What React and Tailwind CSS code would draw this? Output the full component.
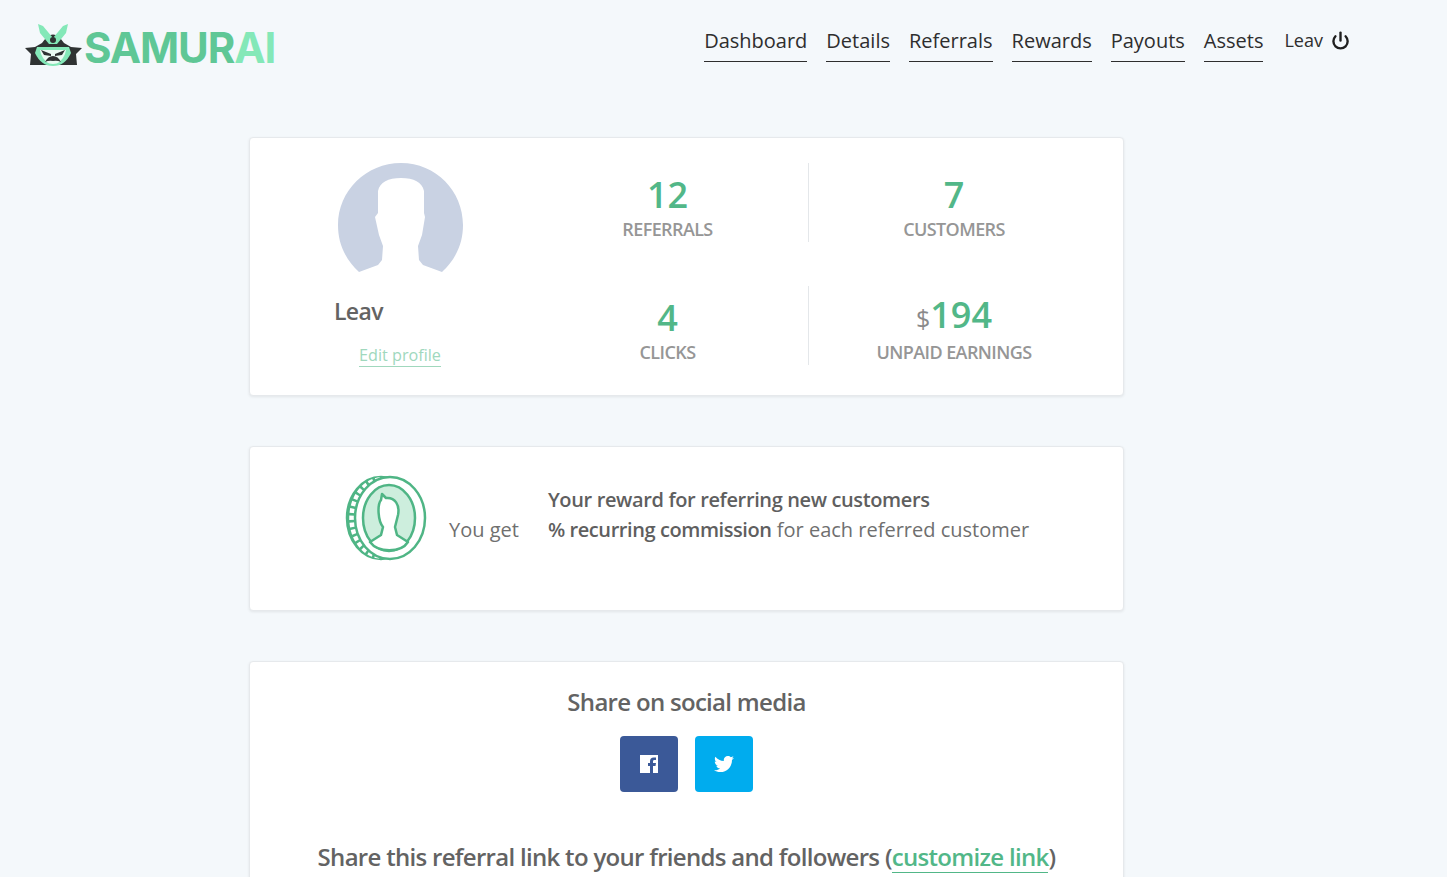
import React from "react";
import { Power } from "lucide-react";
import { FaTwitter } from "react-icons/fa";

const navLinks = ["Dashboard", "Details", "Referrals", "Rewards", "Payouts", "Assets"];

function SamuraiMark() {
  return (
    <svg width="58" height="44" viewBox="0 0 58 44">
      <path d="M18 20 Q29 3 40 20 L47 24 L58 25 L52 31 L53 42 L6 42 L7 31 L1 25 L11 24 Z" fill="#2f3333" />
      <path d="M14 1 L19 3 L29 15 L39 3 L44 1 L42 10 L33 21 L25 21 L16 10 Z" fill="#84e8b8" />
      <circle cx="29" cy="17" r="3" fill="#2f3333" />
      <path d="M13 24 L45 24 L47 30 Q41 43 29 43 Q17 43 11 30 Z" fill="#84e8b8" />
      <path d="M16 27 L42 27 L41 31 Q37 41 29 41 Q21 41 17 31 Z" fill="#eafbf3" />
      <path d="M17 27 L27 31 L27 33 L20 32 Z M41 27 L31 31 L31 33 L38 32 Z" fill="#2f3333" />
      <path d="M21 39 Q24 33 29 33 Q34 33 37 39 Q33 37 29 38 Q25 37 21 39 Z" fill="#2f3333" />
    </svg>
  );
}

function Avatar() {
  return (
    <svg width="126" height="112" viewBox="0 0 126 112">
      <path
        d="M21 109 C6 95 0 79 0 62 C0 28 28 0 63 0 C98 0 125 28 125 62 C125 79 119 95 104 109 L85 102 L81 97 L80 83 L84 72 L87 54 L86 50 L86 28 C84 19 76 15 63 15 C50 15 42 19 40 28 L40 50 L37 54 L41 72 L45 83 L44 97 L40 102 Z"
        fill="#c9d2e3"
      />
    </svg>
  );
}

function Coin() {
  return (
    <svg width="82" height="86" viewBox="0 0 82 86" fill="none">
      <ellipse cx="36" cy="43" rx="34" ry="41" fill="#4fb585" stroke="#4fb585" strokeWidth="2.5" />
      <ellipse cx="37" cy="43" rx="30" ry="38" stroke="#fff" strokeWidth="5.5" strokeDasharray="4.5 2.5" />
      <ellipse cx="45" cy="43" rx="35" ry="41" fill="#fff" stroke="#4fb585" strokeWidth="2.5" />
      <ellipse cx="44" cy="43" rx="26" ry="33" fill="#cdeedd" stroke="#4fb585" strokeWidth="2.5" />
      <path
        d="M25 67 L36 60 L38 52 C33 46 32 30 36 25 L37 19 L41 23 C50 22 55 30 53 40 L50 52 L52 60 L63 67 C56 78 33 78 25 67 Z"
        fill="#fff"
        stroke="#4fb585"
        strokeWidth="2.5"
        strokeLinejoin="round"
      />
    </svg>
  );
}

function Stat({ value, label, prefix, className = "" }) {
  return (
    <div className={`flex h-[79px] flex-col items-center justify-end ${className}`}>
      <div className="text-[36px] leading-[50px] font-semibold text-[#52b788]">
        {prefix && <span className="text-[25px] font-normal text-[#8a8a8a]">{prefix}</span>}
        {value}
      </div>
      <div className="-mt-[3px] text-[18px] leading-[25px] font-semibold tracking-[-0.6px] text-[#969696] uppercase">
        {label}
      </div>
    </div>
  );
}

export default function App() {
  return (
    <div className="h-screen overflow-hidden bg-[#f4f8fb] font-['Open_Sans',sans-serif] text-[#5f5f5f]">
      <header className="flex h-[137px] items-start">
        <div className="mt-[23px] ml-[24px] flex items-start">
          <SamuraiMark />
          <span className="ml-[2px] font-['Inter',sans-serif] text-[42px] leading-[50px] font-bold tracking-[-1.1px] text-[#5fc796]">
            SAMUR<span className="text-[#84e8b8]">AI</span>
          </span>
        </div>
        <nav className="mt-[26px] ml-[429px] flex items-start gap-[19px] text-[20px] text-[#2e2e2e]">
          {navLinks.map((link) => (
            <a key={link} className="h-[36px] border-b border-[#2e2e2e] leading-[29px]">
              {link}
            </a>
          ))}
          <div className="ml-[2px] flex h-[29px] items-center gap-[8px] text-[18px]">
            Leav
            <Power size={19} strokeWidth={3} className="text-[#1f1f1f]" />
          </div>
        </nav>
      </header>

      <main className="ml-[249px] flex w-[875px] flex-col gap-[50px]">
        <section className="flex h-[259px] rounded-[4px] border border-[#e6e9ec] bg-white shadow-[0_1px_3px_rgba(0,0,0,0.08)]">
          <div className="flex w-[300px] flex-col items-center pt-[25px]">
            <div className="ml-[2px]">
              <Avatar />
            </div>
            <div className="mt-[20px] w-[132px] text-[23px] leading-[32px] font-semibold tracking-[-0.65px] text-[#636363]">
              Leav
            </div>
            <a className="mt-[17px] border-b border-[#a0d8bd] text-[16.2px] leading-[22px] text-[#a0d8bd]">Edit profile</a>
          </div>
          <div className="grid flex-1 grid-cols-[258px_1fr] content-start gap-y-[44px] pt-[25px] pr-[24px]">
            <Stat value="12" label="Referrals" className="pr-[23px]" />
            <div className="border-l border-[#e4e7ea]">
              <Stat value="7" label="Customers" />
            </div>
            <Stat value="4" label="Clicks" className="pr-[23px]" />
            <div className="border-l border-[#e4e7ea]">
              <Stat value="194" prefix="$" label="Unpaid earnings" />
            </div>
          </div>
        </section>

        <section className="flex h-[165px] items-start rounded-[4px] border border-[#e6e9ec] bg-white pt-[28px] pl-[95px] shadow-[0_1px_3px_rgba(0,0,0,0.08)]">
          <Coin />
          <span className="mt-[41px] ml-[22px] text-[20px] leading-[27px] text-[#6f6f6f]">You get</span>
          <div className="mt-[10px] ml-[29px] text-[20px] leading-[30px] text-[#6f6f6f]">
            <div className="font-semibold tracking-[-0.37px] text-[#5f5f5f]">Your reward for referring new customers</div>
            <div>
              <span className="font-semibold tracking-[-0.42px] text-[#5f5f5f]">% recurring commission</span> for each referred customer
            </div>
          </div>
        </section>

        <section className="flex h-[300px] flex-col items-center rounded-[4px] border border-[#e6e9ec] bg-white pt-[23px] shadow-[0_1px_3px_rgba(0,0,0,0.08)]">
          <h2 className="text-[24px] leading-[33px] font-semibold tracking-[-0.7px] text-[#636363]">Share on social media</h2>
          <div className="mt-[18px] flex gap-[17px]">
            <a className="flex h-[56px] w-[58px] items-center justify-center rounded-[4px] bg-[#3b5998] text-white">
              <svg width="18" height="18" viewBox="0 0 18 18">
                <path d="M0 0 H18 V18 H13 V11 H15.5 L16 8 H13 V6.5 C13 5.5 13.5 5 14.5 5 H16 V2.5 H13.8 C11.2 2.5 10 4 10 6.2 V8 H8 V11 H10 V18 H0 Z" fill="#fff" />
              </svg>
            </a>
            <a className="flex h-[56px] w-[58px] items-center justify-center rounded-[4px] bg-[#00acee] text-white">
              <FaTwitter size={20} />
            </a>
          </div>
          <p className="mt-[47px] text-[24px] leading-[35px] font-semibold tracking-[-0.7px] text-[#636363]">
            Share this referral link to your friends and followers (
            <a className="inline-block border-b border-[#52b788] leading-[31px] text-[#52b788]">customize link</a>)
          </p>
        </section>
      </main>
    </div>
  );
}
